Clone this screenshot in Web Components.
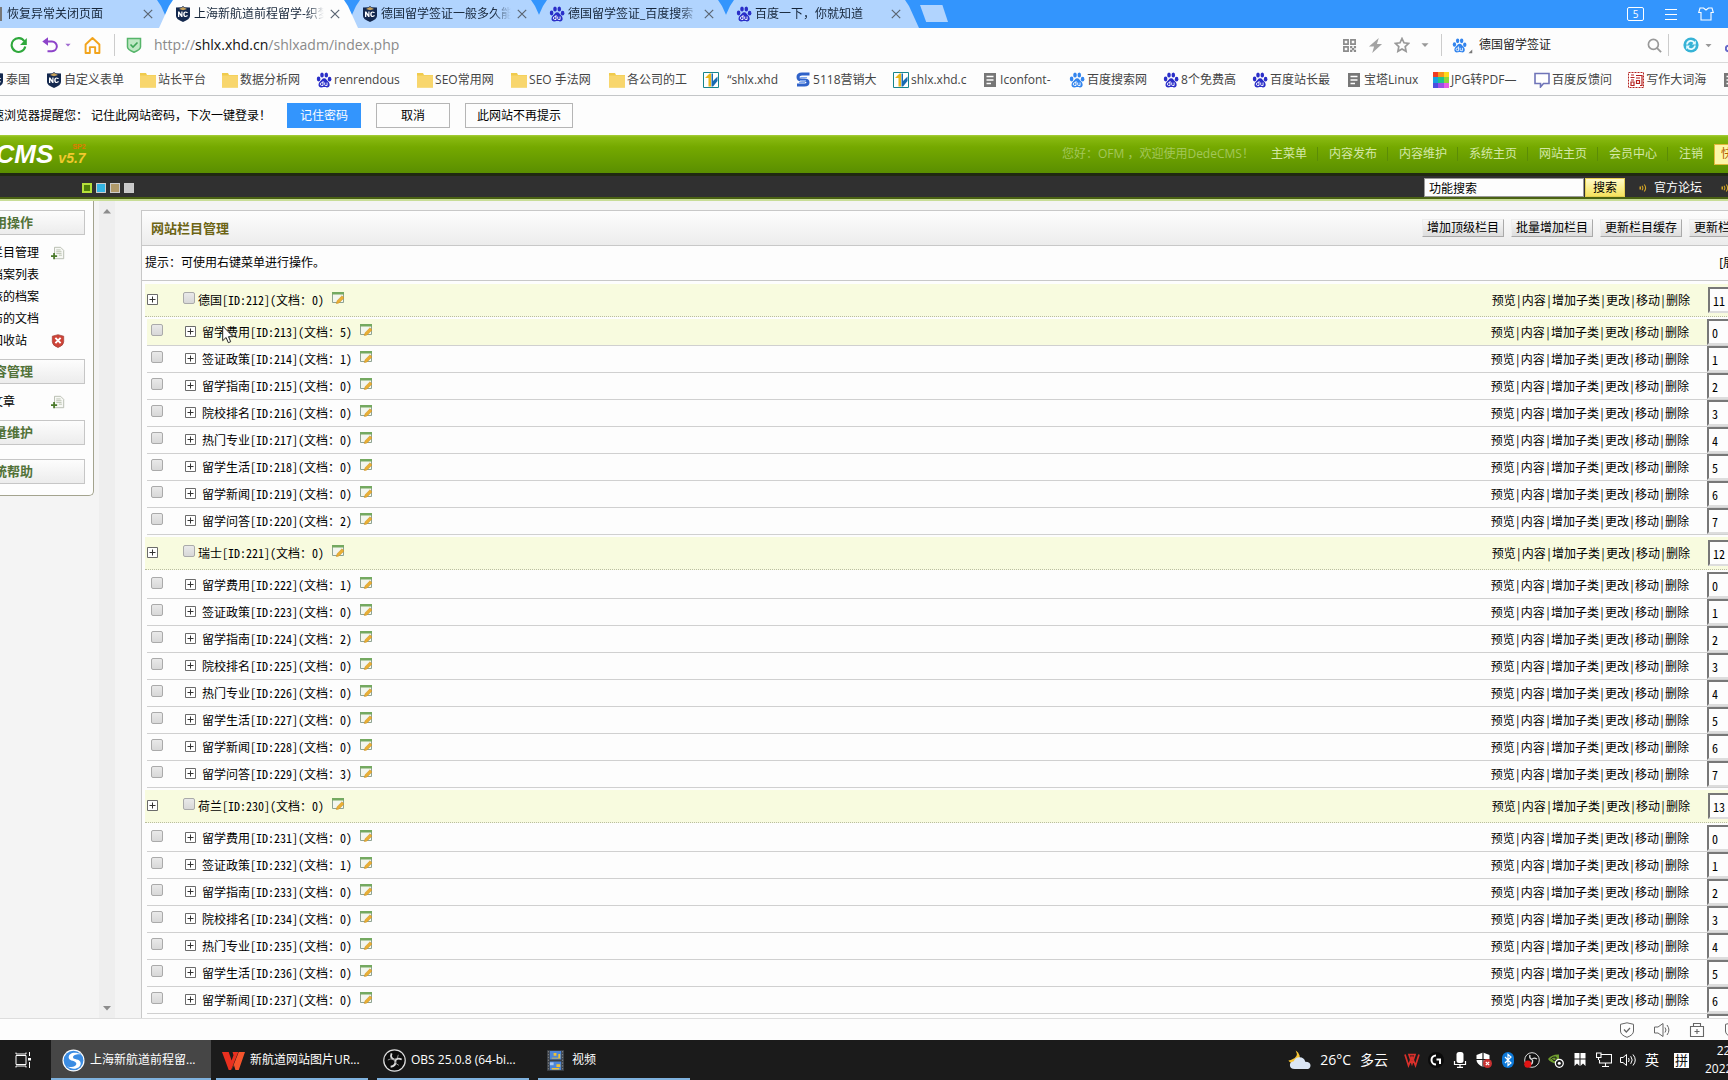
<!DOCTYPE html>
<html lang="zh-CN">
<head>
<meta charset="utf-8">
<title>网站栏目管理</title>
<style>
html,body{margin:0;height:100%;overflow:hidden;background:#fdfdfd}
body{font:12px/16px "Open Sans","Noto Sans CJK SC",sans-serif;color:#000}
</style>
</head>
<body>
<desktop-shell>
  <browser-tabs slot="top"></browser-tabs>
  <address-bar slot="top"></address-bar>
  <bookmark-bar slot="top"></bookmark-bar>
  <password-prompt slot="top"></password-prompt>
  <cms-header slot="top"></cms-header>
  <cms-toolbar slot="top"></cms-toolbar>
  <cms-menu slot="page"></cms-menu>
  <scroll-track slot="page"></scroll-track>
  <category-panel slot="page"></category-panel>
  <browser-status slot="bottom"></browser-status>
  <task-bar slot="bottom"></task-bar>
</desktop-shell>
<script>
const BASE = '<style>:host,*{box-sizing:border-box}a{color:inherit;text-decoration:none}button,input{font:inherit;color:inherit;margin:0;padding:0;border-radius:0}ui-icon{flex:none}</style>';
function define(name, html) {
  customElements.define(name, class extends HTMLElement {
    connectedCallback() {
      if (this.shadowRoot) return;
      const t = document.createElement('template');
      t.innerHTML = BASE + (typeof html === 'function' ? html(this) : html);
      this.attachShadow({mode: 'open'}).append(t.content.cloneNode(true));
    }
  });
}

const paw = (c, t) => `<svg viewBox="0 0 16 16"><g fill="${c}"><ellipse cx="2.6" cy="7" rx="1.8" ry="2.4"/><ellipse cx="6" cy="3" rx="1.8" ry="2.5"/><ellipse cx="10.3" cy="3" rx="1.8" ry="2.5"/><ellipse cx="13.6" cy="7.2" rx="1.8" ry="2.4"/><path d="M8.2 6.2c2 0 2.6 2 4 3.2 2 1.700 2.300 6-1.200 6-1.300 0-1.800-.4-2.900-.4s-1.600.4-2.800.4c-3.600 0-3.300-4.300-1.300-6 1.500-1.200 2.200-3.200 4.200-3.200z"/></g><path d="M7 9v4.500H5.600c-1.700 0-1.700-2.800 0-2.800H7M8.700 10.500v2.200q0 .8 1 .8h1.400v-3" fill="none" stroke="${t}" stroke-width=".9"/></svg>`;
const ICONS = {
  pawDark: paw('#2a2ec8', '#fff'),
  pawBlue: paw('#3385ee', '#fff'),
  nc: '<svg viewBox="0 0 16 16"><path d="M8 0 9.600 1.200 15 1.500V10q0 3.300-7 6-7-2.700-7-6V1.500L6.400 1.200z" fill="#14294f"/><path d="M4 3l4-2 4 2-4 1.300z" fill="#c7a25b"/><path d="M3 11V5.500h1.300l2 3v-3H7.500V11H6.300l-2-3v3zM13 7h-1.500q-.2-.6-.9-.6-1 0-1 1.800t1 1.800q.7 0 .9-.7H13Q12.700 11 10.600 11 8.200 11 8.200 8.200t2.400-2.800Q12.700 5.400 13 7z" fill="#fff"/></svg>',
  folder: '<svg viewBox="0 0 16 16"><path d="M0 1h6l1 2h9v12.500H0z" fill="#f0cb4d"/><path d="M0 3.500h16v12H0z" fill="#f8d66d"/></svg>',
  dede: '<svg viewBox="0 0 16 16"><path d="M.5.5h15v15H.500z" fill="#fff" stroke="#16848c"/><path d="M2 6l4.500-4.500H8v13H5.500V6z" fill="#e8b71b"/><path d="M8.500 1.500H10V9l4.500-4.500v4.500L10 14.500H8.500z" fill="#1a6bb0"/></svg>',
  s5118: '<svg viewBox="0 0 16 16"><path d="M14.500 2H7Q3 2 3 5t4 3h2.500q3.500 0 3.500 2.500T9.500 13H2" fill="none" stroke="#2f62c9" stroke-width="3"/><path d="M12 5.500H6q-1 0-1 1M11 8.500H5M4 10.500h6" fill="none" stroke="#7ea7f0" stroke-width="1"/></svg>',
  doc: '<svg viewBox="0 0 16 16"><path d="M2 1h12v14H2z" fill="#777"/><path d="M4.500 4.500h7M4.500 8h7M4.500 11.500h4.500" stroke="#fff" stroke-width="1.500"/></svg>',
  rainbow: '<svg viewBox="0 0 16 16"><path d="M0 0h5v5H0z" fill="#ee3b24"/><path d="M5 0h6v5H5z" fill="#f7941d"/><path d="M11 0h5v5h-5z" fill="#ffd91a"/><path d="M0 5h5v6H0z" fill="#18a0e0"/><path d="M5 5h6v6H5z" fill="#1fc58f"/><path d="M11 5h5v6h-5z" fill="#8cd63b"/><path d="M0 11h5v5H0z" fill="#4b4fe0"/><path d="M5 11h6v5H5z" fill="#9b4fe8"/><path d="M11 11h5v5h-5z" fill="#e65be6"/></svg>',
  bubble: '<svg viewBox="0 0 16 16"><path d="M1 1.500h14v10H9.500L6.500 15v-3.500H1z" fill="#fff" stroke="#6f74b8" stroke-width="1.600"/></svg>',
  word: '<svg viewBox="0 0 16 16"><path d="M.5.5h15v15H.500z" fill="#fff" stroke="#b5211e" stroke-dasharray="2 1"/><path d="M3 3h3M2.500 5.500h4M3 8h3M3 10h3v3.500H3zM8 3.500h6v10h-2M8 6h4M8.500 8.500h3v3h-3z" fill="none" stroke="#b5211e" stroke-width="1.200"/></svg>',
  close: '<svg viewBox="0 0 16 16"><path d="M3.800 3.800l8.400 8.400M12.200 3.800l-8.400 8.400" stroke="#5b6673" stroke-width="1.200"/></svg>',
  reload: '<svg viewBox="0 0 16 16"><path d="M13.500 4A6.500 6.500 0 1 0 14.400 9" fill="none" stroke="#2fa83c" stroke-width="2"/><path d="M15.800 1v6.500H9.500z" fill="#2fa83c"/></svg>',
  undo: '<svg viewBox="0 0 16 16"><path d="M3 4.500h7a4.800 4.800 0 0 1 0 9.700H5.500" fill="none" stroke="#8d43c9" stroke-width="2"/><path d="M.3 4.500 6 .3v8.400z" fill="#8d43c9"/></svg>',
  home: '<svg viewBox="0 0 16 16"><path d="M1.500 7 8 1l6.500 6v8h-4V9.500h-5V15h-4z" fill="none" stroke="#f2a41c" stroke-width="1.800" stroke-linejoin="round"/></svg>',
  guard: '<svg viewBox="0 0 16 16"><path d="M1.500 1.500h13V10q0 2.500-6.500 5.300Q1.500 12.500 1.500 10z" fill="#bfe8c4" stroke="#56b56a" stroke-width="1.500"/><path d="M4.500 7.500 7 10l4.500-4.500" fill="none" stroke="#3fa557" stroke-width="1.600"/></svg>',
  caret: '<svg viewBox="0 0 16 16"><path d="M1 4.500h14L8 12z" fill="currentColor"/></svg>',
  qr: '<svg viewBox="0 0 16 16"><path d="M2 2h4.500v4.500H2zM9.500 2H14v4.500H9.500zM2 9.500h4.500V14H2z" fill="none" stroke="#8c8c8c" stroke-width="1.800"/><path d="M8.600 8.600h2.400V11H8.600zM12.600 8.600H15V11h-2.400zM10.600 10.600h2.400V13h-2.400zM8.600 12.600H11V15H8.600zM12.600 12.600H15V15h-2.400z" fill="#8c8c8c"/></svg>',
  bolt: '<svg viewBox="0 0 16 16"><path d="M11.500 0 1 9h5.500L4.500 16 15 6.500H9.500z" fill="#a3a3a3"/></svg>',
  star: '<svg viewBox="0 0 16 16"><path d="M8 1.500l2 4.300 4.700.6-3.500 3.200.9 4.700L8 12l-4.100 2.300.9-4.700L1.300 6.400l4.700-.6z" fill="none" stroke="#999" stroke-width="1.700"/></svg>',
  search: '<svg viewBox="0 0 16 16"><circle cx="6.800" cy="6.800" r="5.300" fill="none" stroke="#999" stroke-width="1.800"/><path d="M10.500 10.500 15 15" stroke="#999" stroke-width="2"/></svg>',
  corner: '<svg viewBox="0 0 16 16"><path d="M14 4v10H4z" fill="#777"/></svg>',
  sync: '<svg viewBox="0 0 16 16"><circle cx="8" cy="8" r="7.600" fill="#37b3d6"/><path d="M4 7.500A4 4 0 0 1 11.500 6M12 8.500A4 4 0 0 1 4.500 10" fill="none" stroke="#e8fbff" stroke-width="1.800"/><path d="M12.800 3.500v4H8.900zM3.200 12.500v-4h3.900z" fill="#e8fbff"/></svg>',
  scissors: '<svg viewBox="0 0 16 16"><circle cx="3.500" cy="11.500" r="2.700" fill="none" stroke="#6467c9" stroke-width="2"/><path d="M5 9.500 9 1" stroke="#6467c9" stroke-width="2"/></svg>',
  menu: '<svg viewBox="0 0 16 16"><path d="M2 3.500h12M2 8.500h12M2 13.500h12" stroke="#fff" stroke-width="1.100"/></svg>',
  shirt: '<svg viewBox="0 0 16 16"><path d="M5.500 2 8 4l2.500-2H14l1.300 4.500H13V14H3V6.500H.7L2 2z" fill="none" stroke="#fff" stroke-width="1.100"/></svg>',
  horn: '<svg viewBox="0 0 16 16"><path d="M1 5h3v6H1z" fill="#d6a626"/><path d="M6 3.500q3.500 4.500 0 9M10.500 1q5.500 7 0 14" fill="none" stroke="#d6a626" stroke-width="2.200"/></svg>',
  addDoc: '<svg viewBox="0 0 16 16"><path d="M4 1.500h7L14.500 5v9.500H4z" fill="#f7f8f5" stroke="#b2b8aa"/><path d="M6 4.500h5M6 6.500h6M6 8.500h6M9 10.500h3.500" stroke="#a7b29b" stroke-width=".8"/><path d="M3.500 8v7M0 11.500h7" stroke="#4b7a2b" stroke-width="2"/></svg>',
  badShield: '<svg viewBox="0 0 16 16"><path d="M8 .8 14.500 2.500V9q0 4-6.500 6.500Q1.500 13 1.500 9V2.500z" fill="#cf4438" stroke="#9d3f38" stroke-width=".8"/><path d="M5 4.500l6 6M11 4.500l-6 6" stroke="#fff" stroke-width="2.200"/></svg>',
  plus: '<svg viewBox="0 0 11 11"><path d="M.5.5h10v10H.500z" fill="#fff" stroke="#6b6b6b"/><path d="M5.500 2.500v6M2.500 5.500h6" stroke="#333"/></svg>',
  edit: '<svg viewBox="0 0 12 12"><path d="M.5.5h11v10H.500z" fill="#f3f6ee" stroke="#8fa392"/><path d="M0 0h12v2.500H0z" fill="#74a960"/><path d="M4.300 11.700l.8-3L10 3.800l2 2.200-5 4.900z" fill="#eab035" stroke="#c98e28" stroke-width=".5"/></svg>',
  cursor: '<svg viewBox="0 0 12 19"><path d="M.7 1v14.700l3.400-3.200 2.200 5.200 2.400-1-2.200-5h4.600z" fill="#fff" stroke="#222"/></svg>',
  up: '<svg viewBox="0 0 8 5"><path d="M0 4.500h8L4 0z" fill="#8c8c8c"/></svg>',
  down: '<svg viewBox="0 0 8 5"><path d="M0 0h8L4 4.500z" fill="#8c8c8c"/></svg>',
  stShield: '<svg viewBox="0 0 16 16"><path d="M8 .8 14.500 2.300V9q0 4-6.500 6.300Q1.500 13 1.500 9V2.300z" fill="none" stroke="#666"/><path d="M5 7.500 7.300 10 11 6" fill="none" stroke="#666" stroke-width="1.200"/></svg>',
  stSound: '<svg viewBox="0 0 16 16"><path d="M.5 5h3.500L9 1.500v13L4 11H.500z" fill="none" stroke="#666"/><path d="M11 5.500q2 2.500 0 5M13 3q3.800 5 0 10" fill="none" stroke="#666"/></svg>',
  stCase: '<svg viewBox="0 0 16 16"><path d="M1.500 4.500h13v10h-13zM4.500 4.500v-3h7v3M8 7v5M5.500 9.500h5" fill="none" stroke="#666" stroke-width="1.100"/></svg>',
  taskview: '<svg viewBox="0 0 16 16"><path d="M1 3.500h10v9H1zM1 .5v1.500h10V.500M1 15.500V14h10v1.500M14.500 0v4M14.500 10v6" fill="none" stroke="#fff"/><path d="M13 6h3v2.500h-3z" fill="#fff"/></svg>',
  sogou: '<svg viewBox="0 0 24 24"><circle cx="12" cy="12" r="11.500" fill="#fff"/><circle cx="12" cy="12" r="10.300" fill="#3b8ce2"/><path d="M20 5.500C13 2 6.500 4.500 7 9c.5 4 8 2.500 8 6.500 0 3-5 4.500-10 2.500 7 5 15 2 14.500-3.500C19 9.500 11.500 11.500 11.500 8.500c0-2.500 4-3.500 8.500-3z" fill="#fff"/></svg>',
  wps: '<svg viewBox="0 0 24 24"><path d="M0 3h7l3 9 2-5.500L11 3h6l-7.500 19H7z" fill="#e8301f"/><path d="M10 22 17.500 3H24l-6.500 19H14l-1.500-5z" fill="#f5542c"/></svg>',
  wpsTray: '<svg viewBox="0 0 16 16"><path d="M1 2.500 4.500 13.500 8 5l3.500 8.500L15 2.500M5 2.500h6l-3 9z" fill="none" stroke="#d9302b" stroke-width="1.700"/></svg>',
  obs: '<svg viewBox="0 0 24 24"><circle cx="12" cy="12" r="11.200" fill="#0c0c0c" stroke="#ddd" stroke-width="1.300"/><path d="M9 4.500q-2 5 3 6.500M19.500 11q-5-2.500-7 1.500M8 18.500q5.500-.5 5-6" fill="none" stroke="#ddd" stroke-width="1.900"/><path d="M12 11.500Q8 9 5 11.500M12 12q1 4 4.500 5M12 11q4-1 4-5" fill="none" stroke="#999"/></svg>',
  obsRec: '<svg viewBox="0 0 16 16"><circle cx="8" cy="8" r="7.300" fill="#111" stroke="#ddd"/><path d="M6 3q-1 3.500 2 4.500M13 7q-3.500-2-5 .5M6 12.500q3-.5 2.500-4.500" fill="none" stroke="#ddd" stroke-width="1.400"/><circle cx="3.800" cy="12.200" r="3.600" fill="#e01414"/></svg>',
  video: '<svg viewBox="0 0 18 22"><path d="M0 0h18v22H0z" fill="#3a3f45"/><path d="M3 1h12v9H3zM3 12h12v9H3z" fill="#4d86d8"/><path d="M7 3h3v3H7zM12 4h2v5h-2zM5 8h9v1H5zM10 15h4v3h-4zM5 19h8v1.500H5z" fill="#f1c232"/><path d="M3 13h4v3H3z" fill="#a9c8f0"/><path d="M1.500 1v20M16.500 1v20" stroke="#888" stroke-dasharray="1.500 1.500"/></svg>',
  weather: '<svg viewBox="0 0 24 20"><path d="M8 0Q12 7 3 10 0 11 0 10q3 4.500 8 3 5.500-3 4-8Q11 1.500 8 0z" fill="#f7c534"/><path d="M7 19.500q-5 0-5-4.200 0-3.500 4-4 1.500-4.300 6-4.300 5 0 6 4.700 5.500.3 5.500 4 0 3.800-4.500 3.800z" fill="#dbe6f5"/></svg>',
  logi: '<svg viewBox="0 0 16 16"><circle cx="8" cy="8" r="8" fill="#0b0b0b"/><path d="M8 3.500a4.500 4.500 0 1 0 0 9M8.500 7.500H12V12" fill="none" stroke="#fff" stroke-width="2"/></svg>',
  mic: '<svg viewBox="0 0 16 16"><rect x="4.500" y="0" width="7" height="11" rx="2.500" fill="#fff"/><path d="M2.500 9v3.500h11V9M8 12.500V15M5 15.400h6" fill="none" stroke="#fff" stroke-width="1.200"/></svg>',
  defender: '<svg viewBox="0 0 16 16"><path d="M7 .5 13.500 3v5q0 4-6.500 7Q.5 12 .5 8V3z" fill="#fff"/><path d="M7 0v15M0 7.500h14" stroke="#1b1b1b" stroke-width="1.200"/><circle cx="11.500" cy="11.500" r="4.500" fill="#c83232"/><path d="M9.800 9.800l3.400 3.400M13.200 9.800l-3.400 3.400" stroke="#fff" stroke-width="1.200"/></svg>',
  bluetooth: '<svg viewBox="0 0 16 16"><rect x="2" y="0" width="12" height="16" rx="6" fill="#0d78d7"/><path d="M5 5l6 6-3 2.500v-11L11 5l-6 6" fill="none" stroke="#fff" stroke-width="1.200"/></svg>',
  nvidia: '<svg viewBox="0 0 16 16"><path d="M0 7q4-5 11-4.500V11Q3 12 0 7z" fill="#6f9d2e"/><path d="M2.500 7Q5 4.500 8 5v3.500Q5 9.500 4.500 7" fill="none" stroke="#1b1b1b"/><circle cx="11.300" cy="11.300" r="4" fill="#1b1b1b" stroke="#fff" stroke-width="1.200"/><circle cx="11.300" cy="11.300" r="1.500" fill="#fff"/></svg>',
  flag: '<svg viewBox="0 0 16 16"><path d="M2.500 1h5v13L5 11.500 2.500 14zM8.500 1h5v13L11 11.500 8.500 14z" fill="#fff"/><path d="M1.500 7h13" stroke="#1b1b1b"/></svg>',
  network: '<svg viewBox="0 0 16 16"><path d="M5.500 2.500h10v8.500H3.500V8M9.500 11v3M6 14.500h7M.5 1h4.500v4.500H.500zM2.500 5.500V8" fill="none" stroke="#fff" stroke-width="1.100"/></svg>',
  volume: '<svg viewBox="0 0 16 16"><path d="M.5 5.500H3L6.500 2.500v11L3 10.500H.500z" fill="none" stroke="#fff"/><path d="M8.500 6q1.300 2 0 4M10.700 4.200q3 3.800 0 7.600M13 2.500q4.500 5.500 0 11" fill="none" stroke="#fff"/></svg>'
};
define('ui-icon', el => {
  const w = el.getAttribute('w') || 16, h = el.getAttribute('h') || w;
  return `<style>:host{display:block;width:${w}px;height:${h}px}svg{display:block;width:100%;height:100%}</style>${ICONS[el.getAttribute('name')]}`;
});

define('desktop-shell', `<style>
:host{display:flex;flex-direction:column;height:100vh;overflow:hidden}
.page{flex:1;min-height:0;display:flex;overflow:hidden;background:#f4f4f4}
</style><slot name="top"></slot><div class="page"><slot name="page"></slot></div><slot name="bottom"></slot>`);

/* Browser chrome */
define('browser-tab', el => `<style>
:host{display:flex;align-items:center;gap:3px;flex:none;width:199px;height:28px;padding:0 15px 0 16px;margin-right:-12px;background:#b1d4fe;color:#16263a;clip-path:polygon(0 100%,10px 6px,14px 0,185px 0,189px 6px,100% 100%)}
:host([active]){background:#fdfdfd;position:relative;z-index:1}
.t{flex:1;overflow:hidden;white-space:nowrap;-webkit-mask-image:linear-gradient(to right,#000 86%,transparent)}
.c{border:0;background:none}
</style><ui-icon name="${el.getAttribute('icon')}"></ui-icon><span class="t"><slot></slot></span><button class="c" aria-label="关闭标签"><ui-icon name="close"></ui-icon></button>`);
define('browser-tabs', `<style>
:host{display:flex;justify-content:space-between;height:28px;flex:none;background:#3395fd}
nav{display:flex;margin-left:-28px}
.new{border:0;background:#b1d4fe;width:28px;height:17px;margin:5px 0 0 13px;clip-path:polygon(0 0,80% 0,100% 100%,22% 100%)}
.r{display:flex;align-items:center;gap:19px;padding-right:14px;color:#fff}
.n{width:17px;height:14px;border:1px solid #fff;border-radius:2px;text-align:center;font-size:10px;line-height:12px}
</style><nav><browser-tab icon="doc">恢复异常关闭页面</browser-tab><browser-tab icon="nc" active>上海新航道前程留学-织梦</browser-tab><browser-tab icon="nc">德国留学签证一般多久能</browser-tab><browser-tab icon="pawDark">德国留学签证_百度搜索</browser-tab><browser-tab icon="pawDark">百度一下，你就知道</browser-tab><button class="new" aria-label="新标签"></button></nav>
<div class="r"><span class="n">5</span><ui-icon name="menu"></ui-icon><ui-icon name="shirt"></ui-icon></div>`);
define('address-bar', `<style>
:host{display:flex;align-items:center;height:35px;flex:none;background:#fdfdfd;border-bottom:1px solid #d9d9d9;padding-left:10px}
.l,.m,.r{display:flex;align-items:center}
.l{flex:1}
.l ui-icon{margin-right:7px}
.car{color:#a06bd0}
i{width:1px;height:22px;background:#ccc}
.url{border:0;background:none;outline:0;flex:1;font-size:14px}
.url b{font-weight:400;color:#111}
.url{color:#8a8a8a;margin-left:5px}
.m{gap:11px;padding-right:12px;color:#999}
.q{width:176px;border:0;outline:0;background:none;margin-left:0;color:#222}
.r{gap:6px;margin-right:-13px;color:#999}
.r i{margin-right:8px}
</style>
<div class="l"><ui-icon name="reload" w="17"></ui-icon><ui-icon name="undo" style="margin-left:8px"></ui-icon><ui-icon class="car" name="caret" w="6"></ui-icon><ui-icon name="home" w="17" style="margin-left:6px"></ui-icon><i style="margin-left:6px"></i><ui-icon name="guard" style="margin-left:11px"></ui-icon><span class="url">http://<b>shlx.xhd.cn</b>/shlxadm/index.php</span></div>
<div class="m"><ui-icon name="qr" w="15"></ui-icon><ui-icon name="bolt" w="15"></ui-icon><ui-icon name="star"></ui-icon><ui-icon name="caret" w="8"></ui-icon></div>
<i></i>
<div class="r"><ui-icon name="pawBlue" w="15" style="margin-left:10px"></ui-icon><ui-icon name="corner" w="6" style="margin:12px 0 0 -6px"></ui-icon><input class="q" aria-label="搜索" value="德国留学签证"><ui-icon name="search" w="15" style="margin-left:-14px"></ui-icon><i></i><ui-icon name="sync"></ui-icon><ui-icon name="caret" w="7"></ui-icon><ui-icon name="scissors" style="margin-left:7px"></ui-icon></div>`);
define('book-mark', el => `<style>
:host{display:block;flex:none}
a{display:flex;align-items:center;gap:2px;white-space:nowrap}
span{${el.hasAttribute('w') ? `width:${el.getAttribute('w')}px` : ''}}
</style><a href="#"><ui-icon name="${el.getAttribute('icon')}"></ui-icon><span><slot></slot></span></a>`);
define('bookmark-bar', () => {
  const list = [['nc','泰国'],['nc','自定义表单'],['folder','站长平台'],['folder','数据分析网'],['pawDark','renrendous',67],['folder','SEO常用网',60],['folder','SEO 手法网',64],['folder','各公司的工'],['dede','&nbsp;&nbsp;“shlx.xhd',58],['s5118','5118营销大',64],['dede','shlx.xhd.c',55],['doc','Iconfont-',53],['pawBlue','百度搜索网'],['pawDark','8个免费高',55],['pawDark','百度站长最'],['doc','宝塔Linux',53],['rainbow','JPG转PDF—',67],['bubble','百度反馈问'],['word','写作大词海'],['doc','']];
  return `<style>:host{display:flex;gap:16px;align-items:center;height:33px;flex:none;background:#fdfdfd;border-bottom:1px solid #c4c6c8;padding-top:1px;color:#444}
book-mark:first-of-type{margin-left:-12px}</style>` + list.map(b => `<book-mark icon="${b[0]}"${b[2] ? ` w="${b[2]}"` : ''}>${b[1]}</book-mark>`).join('');
});
define('password-prompt', `<style>
:host{display:flex;align-items:center;height:39px;flex:none;background:#fdfdfd}
span{margin-left:-20px;width:307px;white-space:nowrap}
button{height:25px;border:1px solid #b5b5b5;background:#fdfdfd;margin-right:15px;padding:0 11px}
.y{width:74px;background:#3395fd;border-color:#3395fd;color:#fff}
.n{width:74px}
</style><span>极速浏览器提醒您： 记住此网站密码，下次一键登录！</span><button class="y">记住密码</button><button class="n">取消</button><button>此网站不再提示</button>`);

/* CMS frame */
define('cms-header', `<style>
:host{display:flex;justify-content:space-between;align-items:center;height:38px;flex:none;color:#d5e8a8;background:linear-gradient(#a8cf3d,#8abb12 2px,#75a900 12px,#5a8f00)}
.logo{display:flex;align-items:center;margin-left:-68px;font:italic 900 26px/28px "Liberation Sans",sans-serif;color:#fff}
.v{display:flex;flex-direction:column;font:italic 700 14px/14px "Liberation Sans",sans-serif;color:#f2c92e;margin-left:5px}
.v small{font:700 7px/8px "Liberation Sans",sans-serif;color:#e07800;align-self:flex-end}
nav{display:flex;align-items:center;margin-right:-28px}
.hi{color:#a3c75a;margin-right:6px;white-space:nowrap}
a{padding:0 10px 0 11px;line-height:14px;white-space:nowrap;border-right:1px solid #5b8c06}
a:last-of-type{border:0;padding-right:11px}
button{height:21px;width:42px;border:1px solid #e3b93c;background:#fdf6a8;color:#b35a00;padding:0 6px;text-align:left;white-space:nowrap}
</style><div class="logo">DedeCMS<span class="v"><small>SP2</small>v5.7</span></div>
<nav><span class="hi">您好：OFM ，欢迎使用DedeCMS！</span><a href="#">主菜单</a><a href="#">内容发布</a><a href="#">内容维护</a><a href="#">系统主页</a><a href="#">网站主页</a><a href="#">会员中心</a><a href="#">注销</a><button>快捷</button></nav>`);
define('cms-toolbar', `<style>
:host{display:flex;justify-content:space-between;align-items:center;height:28px;flex:none;background:#303030;border-top:3px solid #202911;border-bottom:2px solid #c8dd97;box-shadow:inset 0 -2px #4a6213;padding-left:82px;color:#fff}
.s{display:flex;gap:4px}
.s button{width:10px;height:10px;border:1px solid #ccc}
.r{display:flex;align-items:center;margin-right:-1px}
input{width:160px;height:19px;border:1px solid #999;background:#fdfdfd;color:#000;padding:0 4px}
.go{width:40px;height:19px;margin:0 14px 0 1px;border:1px solid #e6cf52;background:linear-gradient(#fffbc9,#f5e25e);color:#000}
a{margin:0 19px 0 7px}
</style><div class="s"><button aria-label="绿色" style="background:#4f7f08;border:2px solid #b5e03a"></button><button aria-label="蓝色" style="background:#34b4e2"></button><button aria-label="棕色" style="background:#b09a6a"></button><button aria-label="灰色" style="background:#c8c8c8"></button></div>
<div class="r"><input aria-label="功能搜索" value="功能搜索"><button class="go">搜索</button><ui-icon name="horn" w="8" h="10"></ui-icon><a href="#">官方论坛</a><ui-icon name="horn" w="8" h="10"></ui-icon></div>`);
define('menu-group', el => `<style>
:host{display:block}
h3{margin:0;height:25px;border:1px solid #c6c6c6;border-left:0;background:linear-gradient(#fdfdfd,#ececec);font-size:13px;line-height:23px;color:#527238}
.b{padding:7px 0}
:host([empty]) .b{padding:0}
</style><h3>${el.getAttribute('label')}</h3><div class="b"><slot></slot></div>`);
define('menu-item', el => `<style>
:host{display:flex;height:22px;align-items:center;justify-content:space-between;margin-left:-14px;padding-right:20px;line-height:22px}
</style><a href="#"><slot></slot></a>${el.hasAttribute('icon') ? `<ui-icon name="${el.getAttribute('icon')}" w="14"></ui-icon>` : ''}`);
define('cms-menu', `<style>
:host{display:block;width:113px;flex:none;align-self:flex-start;margin-left:-19px;padding:9px 8px 11px 0;background:#fdfdfd;border:1px solid #a3a38e;border-width:0 1px 1px 0;border-radius:0 0 5px 0;white-space:nowrap}
menu-group[empty] + menu-group{margin-top:14px}
</style><menu-group label="常用操作"><menu-item icon="addDoc">网站栏目管理</menu-item><menu-item>所有档案列表</menu-item><menu-item>待审核的档案</menu-item><menu-item>我发布的文档</menu-item><menu-item icon="badShield">内容回收站</menu-item></menu-group>
<menu-group label="内容管理"><menu-item icon="addDoc">普通文章</menu-item></menu-group>
<menu-group label="批量维护" empty></menu-group><menu-group label="系统帮助" empty></menu-group>`);
define('scroll-track', `<style>
:host{display:flex;flex-direction:column;justify-content:space-between;align-items:center;flex:none;width:16px;margin:0 26px 0 5px;padding:8px 0 7px;background:#eee}
</style><ui-icon name="up" w="8" h="5"></ui-icon><ui-icon name="down" w="8" h="5"></ui-icon>`);

/* Category tree */
const NAMES = ['留学费用','签证政策','留学指南','院校排名','热门专业','留学生活','留学新闻','留学问答'];
const GROUPS = [
  {name: '德国', id: 212, order: 11, docs: [5,1,0,0,0,0,0,2]},
  {name: '瑞士', id: 221, order: 12, docs: [1,0,2,0,0,0,0,3]},
  {name: '荷兰', id: 230, order: 13, docs: [0,1,0,0,0,0,0]}
];
const acts = ['预览','内容','增加子类','更改','移动','删除'].map(a => `<a href="#">${a}</a>`).join('|');
const row = (cls, name, id, docs, order) => `<tr class="${cls}"><td class="c"><input type="checkbox" id="c${id}"></td><td class="x"><ui-icon name="plus" w="11"></ui-icon></td><td class="n"><label for="c${id}">${name}[ID:${id}](文档：${docs})</label><ui-icon name="edit" w="12"></ui-icon></td><td class="a">${acts}</td><td class="o"><input value="${order}" aria-label="排序"></td></tr>`;
define('category-tree', () => `<style>
:host{display:block;padding:3px 0 0 3px;font-family:"Noto Sans CJK SC",sans-serif;font-feature-settings:"hwid"}
table,tbody{display:block}
tr{display:flex;align-items:center}
td{padding:0;display:flex;align-items:center}
.top{height:33px;background:#f8fbdf;border-bottom:1px dotted #b9bda0;margin-top:2px;padding-left:2px}
.top:first-child{margin-top:0}
.sub{height:27px;border-bottom:1px solid #d0d0d0;margin-left:2px;padding-left:4px}
.top + .sub{height:29px;border-top:2px solid #fdfdfd}
.hot{background:#f8fbdf}
.top .x{order:-1;width:36px}
.c{margin-bottom:4px}
.x{margin-bottom:2px}
.sub .c{width:34px}
.sub .x{width:17px}
.top .c{width:15px}
.n{flex:1;white-space:nowrap;gap:8px}
.n ui-icon{margin-bottom:4px}
.a{white-space:nowrap}
input[type=checkbox]{appearance:none;width:12px;height:12px;border:1px solid #aaa;border-radius:2px;background:linear-gradient(#e9e9e9,#d8d8d8)}
.o{margin-left:18px;align-self:stretch}
.o input{width:80px;height:26px;border:2px solid #777;border-right-color:#ddd;border-bottom-color:#ddd;background:#fdfdfd;padding-left:3px;outline:0}
.top .o input{width:79px}
</style><table><tbody>${GROUPS.map(g => row('top', g.name, g.id, 0, g.order) + g.docs.map((d, i) => row('sub' + (g.id === 212 && i === 0 ? ' hot' : ''), NAMES[i], g.id + 1 + i, d, i)).join('')).join('')}
<tr class="sub"><td class="n"></td><td class="o"><input aria-label="排序"></td></tr></tbody></table>`);
define('category-panel', `<style>
:host{display:block;flex:1;min-width:0;margin:9px -60px 0 0;background:#fdfdfd;border:1px solid #c8c8c8;border-bottom:0;position:relative}
header{display:flex;justify-content:space-between;align-items:center;height:35px;border-bottom:1px solid #c8c8c8;background:linear-gradient(#fdfdfd,#ececec);padding-left:9px}
h2{margin:0;font-size:13px;color:#6c6414}
.b{display:flex;gap:7px;padding-right:6px}
button{width:82px;height:18px;border:1px solid #eee;border-right-color:#aaa;border-bottom-color:#aaa;background:linear-gradient(#f8f8f8,#ddd);line-height:14px;white-space:nowrap;text-align:left;padding-left:4px}
button:last-child{width:92px}
p{display:flex;justify-content:space-between;align-items:center;height:35px;margin:0;border-bottom:1px solid #c8c8c8;padding:0 12px 0 3px}
.cur{position:absolute;left:80px;top:114px}
</style><header><h2>网站栏目管理</h2><div class="b"><button>增加顶级栏目</button><button>批量增加栏目</button><button>更新栏目缓存</button><button>更新栏目HTML</button></div></header>
<p><span>提示：可使用右键菜单进行操作。</span><a href="#">[展开全部]</a></p>
<category-tree></category-tree><ui-icon class="cur" name="cursor" w="12" h="19"></ui-icon>`);

/* Bottom bars */
define('browser-status', `<style>
:host{display:flex;justify-content:flex-end;align-items:center;gap:19px;height:22px;flex:none;margin-right:-12px;padding-top:1px;background:#fdfdfd;border-top:1px solid #ddd;z-index:1}
</style><ui-icon name="stShield"></ui-icon><ui-icon name="stSound"></ui-icon><ui-icon name="stCase"></ui-icon><ui-icon name="stShield"></ui-icon>`);
define('task-button', el => `<style>
:host{display:block;flex:none}
button{display:flex;align-items:center;gap:5px;width:152px;height:40px;border:0;border-bottom:2px solid #7fb2de;background:none;padding:2px 6px 0;text-align:left;white-space:nowrap}
:host([active]) button{width:160px;padding-left:11px;background:#464646}
:host([wide]) button{gap:8px;padding-left:9px}
</style><button><ui-icon name="${el.getAttribute('icon')}" w="${el.getAttribute('w')}" h="23"></ui-icon><slot></slot></button>`);
define('task-bar', `<style>
:host{display:flex;justify-content:space-between;height:40px;flex:none;background:#1b1b1b;color:#fff}
.l,.r,.t{display:flex;align-items:center}
.v{border:0;background:none;width:51px;padding-left:15px}
.l{gap:9px}
.v,task-button[active]{margin-right:-9px}
task-button[icon=wps]{margin-left:5px}
.r{margin-right:-31px}
.w{font-size:14px;margin-left:9px}
.t{margin-left:12px}
.t>*{width:24px;display:flex;justify-content:center;font-size:14px}
.p{width:15px;height:15px;background:#fff;color:#111;font-size:13px;line-height:14px;margin:0 16px 0 10px;text-align:center;overflow:hidden}
.k{text-align:center;line-height:18px;width:54px}
</style><div class="l"><button class="v" aria-label="任务视图"><ui-icon name="taskview"></ui-icon></button><task-button active icon="sogou" w="23">上海新航道前程留...</task-button><task-button icon="wps" w="23">新航道网站图片UR...</task-button><task-button icon="obs" w="23">OBS 25.0.8 (64-bi...</task-button><task-button wide icon="video" w="17">视频</task-button></div>
<div class="r"><ui-icon name="weather" w="23" h="20"></ui-icon><span class="w">26°C</span><span class="w">多云</span>
<div class="t">${['wpsTray','logi','mic','defender','bluetooth','obsRec','nvidia','flag','network','volume'].map(n => `<div><ui-icon name="${n}"></ui-icon></div>`).join('')}<span>英</span></div><span class="p">拼</span><span class="k">22:10<br>2022/7/20</span></div>`);
</script>
</body>
</html>
